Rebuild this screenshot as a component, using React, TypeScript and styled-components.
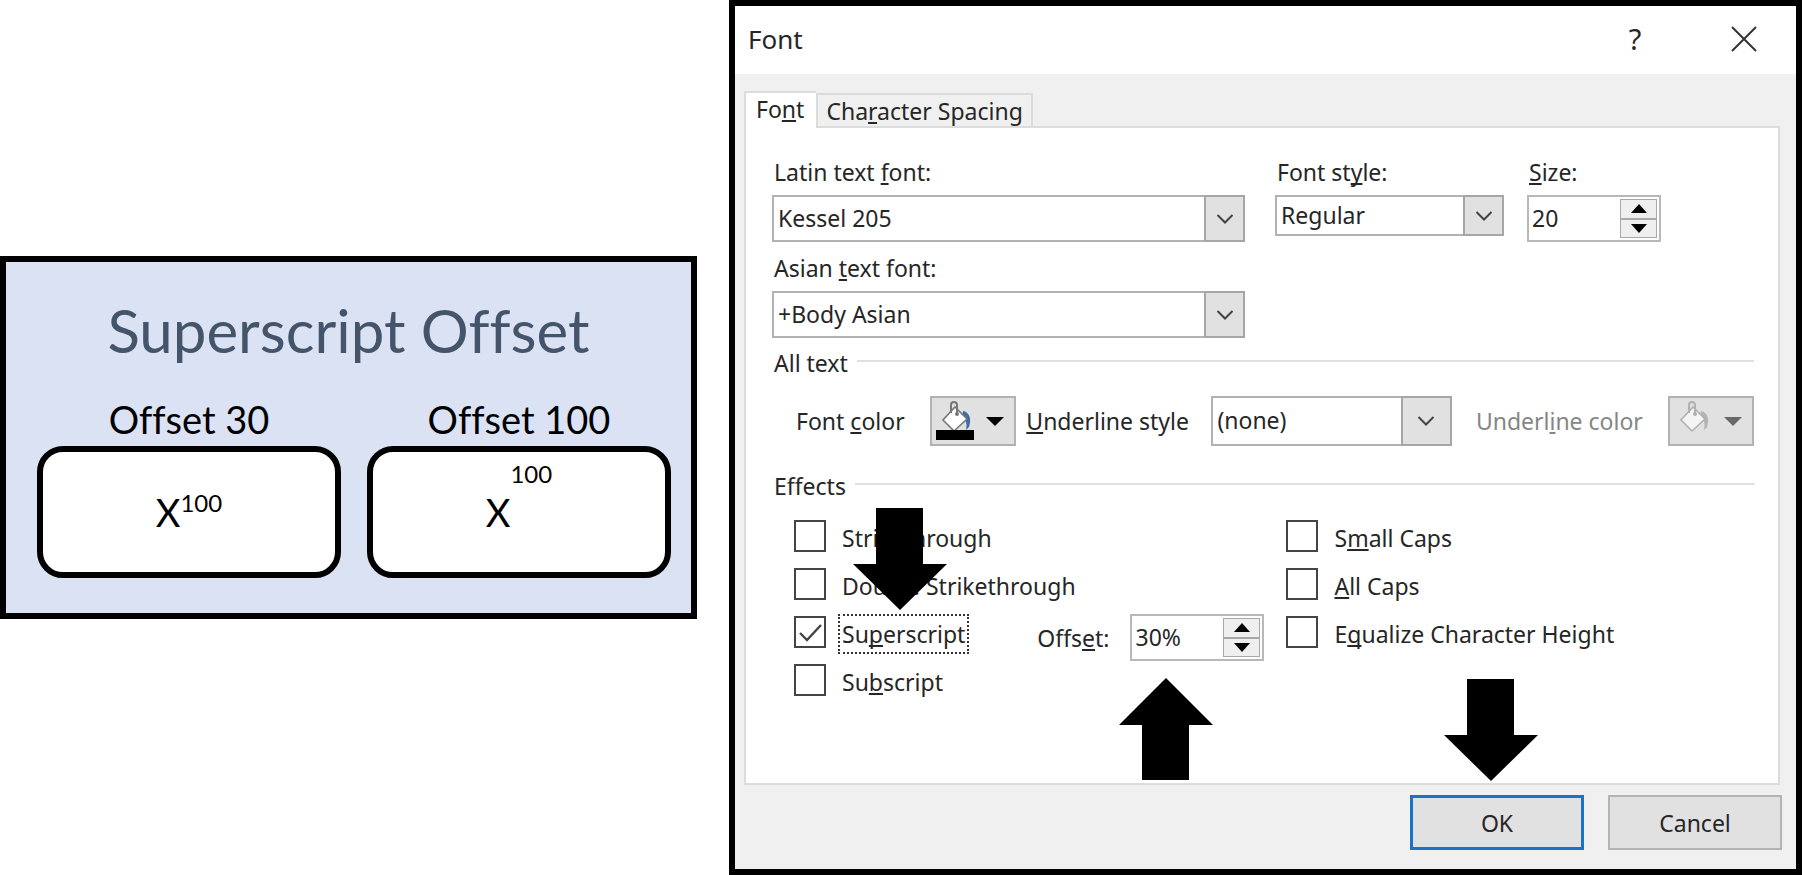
import React from "react";
import styled, { createGlobalStyle, css } from "styled-components";

const GlobalStyle = createGlobalStyle`
  *, *::before, *::after { box-sizing: border-box; }
  body { margin: 0; background: #fff; }
  button, input, select { font: inherit; color: inherit; margin: 0; }
`;

const Page = styled.main`
  display: grid;
  grid-template-columns: minmax(0, 697fr) minmax(0, 1073fr);
  gap: 32px;
  align-items: center;
  min-height: 100vh;
`;

/* ---------- Slide sample ---------- */

const Slide = styled.section`
  border: 6px solid #000;
  background: #dae2f3;
  padding: 24px 20px 35px 31px;
  font-family: Lato, "Liberation Sans", sans-serif;
  font-variant-ligatures: none;
  color: #000;
`;

const SlideTitle = styled.h1`
  margin: 0;
  padding-right: 11px;
  font-size: 60px;
  line-height: 88px;
  font-weight: 400;
  text-align: center;
  color: #44546a;
  white-space: nowrap;
`;

const Samples = styled.div`
  display: grid;
  grid-template-columns: 1fr 1fr;
  gap: 26px;
  margin-top: 24px;
`;

const Sample = styled.figure`
  margin: 0;
  text-align: center;
`;

const SampleLabel = styled.figcaption`
  padding-bottom: 6px;
  font-size: 38px;
  line-height: 42px;
  white-space: nowrap;
`;

const SampleBox = styled.div`
  display: flex;
  justify-content: center;
  align-items: center;
  height: 132px;
  border: 6px solid #000;
  border-radius: 26px;
  background: #fff;
  font-size: 38px;
  line-height: 48px;
`;

const Raised = styled.sup<{ $rise: number }>`
  align-self: flex-start;
  padding-top: ${(p) => p.$rise}px;
  font-size: 24px;
  line-height: 32px;
`;

/* ---------- Dialog frame ---------- */

const Dialog = styled.section`
  display: flex;
  flex-direction: column;
  min-height: 100vh;
  border: 6px solid #000;
  background: #f0f0f0;
  font-family: "Noto Sans", "Open Sans", sans-serif;
  font-size: 23px;
  line-height: 32px;
  color: #262626;
  white-space: nowrap;
`;

const TitleBar = styled.header`
  display: flex;
  align-items: center;
  gap: 61px;
  height: 68px;
  padding: 0 28px 2px 13px;
  background: #fff;
`;

const DialogTitle = styled.h2`
  flex: 1;
  margin: 0;
  font-size: 26px;
  font-weight: 400;
`;

const BarButton = styled.button`
  display: flex;
  align-items: center;
  justify-content: center;
  width: 48px;
  height: 48px;
  padding: 0;
  border: 0;
  background: none;
  font-size: 29px;
`;

const Tabs = styled.div`
  display: flex;
  align-items: flex-end;
  height: 53px;
  padding: 16px 9px 0;
`;

const Tab = styled.button<{ $active?: boolean }>`
  height: 34px;
  padding: 0 8px;
  border: 2px solid #dcdcdc;
  border-bottom: 0;
  background: #f0f0f0;
  line-height: 30px;
  ${(p) =>
    p.$active &&
    css`
      position: relative;
      height: 38px;
      padding: 0 12px 4px 10px;
      border-right: 0;
      margin-bottom: -2px;
      background: #fff;
    `}
`;

const Panel = styled.div`
  flex: 1;
  margin: -1px 16px 0 9px;
  padding: 28px 24px 24px 26px;
  border: 2px solid #dcdcdc;
  background: #fff;
`;

const Footer = styled.footer`
  display: flex;
  justify-content: flex-end;
  gap: 24px;
  padding: 10px 14px 19px;
`;

const ActionSlot = styled.div`
  position: relative;
`;

const ActionButton = styled.button<{ $primary?: boolean }>`
  width: 174px;
  height: 55px;
  padding: 0;
  border: ${(p) => (p.$primary ? "3px solid #1a74c6" : "2px solid #b4b4b4")};
  background: #e1e1e1;
`;

/* ---------- Fields ---------- */

const Key = styled.u`
  text-decoration-thickness: 2px;
  text-underline-offset: 2px;
  text-decoration-skip-ink: none;
`;

const TopFields = styled.div`
  display: grid;
  grid-template-columns: minmax(0, 503fr) minmax(0, 252fr) minmax(0, 227fr);
  row-gap: 10px;
`;

const Field = styled.div<{ $end: number }>`
  display: flex;
  flex-direction: column;
  gap: 7px;
  padding-right: ${(p) => p.$end}px;
`;

const FieldLabel = styled.label<{ $muted?: boolean }>`
  padding-left: 2px;
  color: ${(p) => (p.$muted ? "#868686" : "inherit")};
`;

const Combo = styled.div<{ $height: number; $arrow: number }>`
  display: grid;
  grid-template-columns: minmax(0, 1fr) ${(p) => p.$arrow}px;
  height: ${(p) => p.$height}px;
`;

const ComboSelect = styled.select`
  grid-area: 1 / 1 / 2 / 3;
  appearance: none;
  width: 100%;
  padding: 0 4px 2px;
  border: 2px solid #b2b2b2;
  border-radius: 0;
  background: #fff;
`;

const ComboArrow = styled.span`
  grid-area: 1 / 2 / 2 / 3;
  display: flex;
  align-items: center;
  justify-content: center;
  border: 2px solid #a6a6a6;
  background: #e1e1e1;
  pointer-events: none;
`;

const SpinBox = styled.div`
  display: flex;
  width: 134px;
  height: 47px;
  padding: 2px;
  border: 2px solid #b8b8b8;
  background: #fff;
`;

const SpinInput = styled.input`
  flex: 1;
  min-width: 0;
  padding: 0 1px 2px;
  border: 0;
  background: none;
`;

const SpinKeys = styled.div`
  display: grid;
  grid-template-rows: 1fr 1fr;
  width: 37px;
`;

const SpinKey = styled.button`
  display: flex;
  align-items: center;
  justify-content: center;
  padding: 0;
  border: 1px solid #a8a8a8;
  background: #efefef;
`;

const GroupTitle = styled.h3<{ $gap: number }>`
  display: flex;
  align-items: center;
  gap: 9px;
  margin: ${(p) => p.$gap}px 0 16px;
  padding-left: 2px;
  font-size: inherit;
  font-weight: 400;

  &::after {
    content: "";
    flex: 1;
    height: 2px;
    margin-bottom: 4px;
    background: #e0e0e0;
  }
`;

const ColorRow = styled.div`
  display: grid;
  grid-template-columns:
    minmax(0, 135fr) minmax(0, 94fr) minmax(0, 186fr)
    minmax(0, 261fr) minmax(0, 193fr) 86px;
  align-items: center;
  min-height: 52px;
  padding-left: 22px;
`;

const ColorButton = styled.button`
  display: flex;
  align-items: center;
  justify-content: space-between;
  width: 86px;
  height: 50px;
  padding: 0 10px 0 4px;
  border: 2px solid #b2b2b2;
  background: #e1e1e1;
`;

const ComboCell = styled.div`
  padding-right: 22px;
`;

const Effects = styled.div`
  display: grid;
  grid-template-columns: minmax(0, 493fr) minmax(0, 468fr);
  padding-left: 22px;
`;

const CheckList = styled.div`
  display: flex;
  flex-direction: column;
  gap: 8px;
`;

const CheckRow = styled.div`
  position: relative;
  display: flex;
  align-items: flex-start;
  height: 40px;
`;

const CheckBox = styled.input`
  appearance: none;
  flex: none;
  width: 32px;
  height: 32px;
  margin: 2px 12px 0 0;
  border: 2px solid #444;
  background: #fff;

  &:checked {
    background: url("data:image/svg+xml,%3Csvg xmlns='http://www.w3.org/2000/svg' viewBox='0 0 28 28'%3E%3Cpath d='M4 15l7 7L25 7' fill='none' stroke='%23444' stroke-width='2.4'/%3E%3C/svg%3E");
  }
`;

const CheckLabel = styled.label<{ $focused?: boolean }>`
  position: relative;
  padding: 2px;
  border: 2px dotted ${(p) => (p.$focused ? "#333" : "transparent")};
`;

const OffsetField = styled.div`
  display: flex;
  align-items: center;
  gap: 21px;
  height: 47px;
  margin-left: auto;
  margin-right: 22px;
`;

const PointerSlot = styled.div`
  position: relative;
`;

const Pointer = styled.svg<{ $place: "label" | "spin" | "ok" }>`
  position: absolute;
  z-index: 1;
  width: 94px;
  height: 102px;
  fill: #000;
  ${(p) => p.$place === "label" && "left: 13px; bottom: calc(100% + 6px);"}
  ${(p) => p.$place === "spin" && "left: -11px; top: calc(100% + 17px);"}
  ${(p) => p.$place === "ok" && "left: 34px; bottom: calc(100% + 14px);"}
`;

/* ---------- Drawings ---------- */

const BlockArrow = ({ place, up }: { place: "label" | "spin" | "ok"; up?: boolean }) => (
  <Pointer $place={place} viewBox="0 0 94 102" aria-hidden="true">
    <path
      d={
        up
          ? "M47 0L94 47H70V102H23V47H0z"
          : "M23 0H70V56H94L47 102L0 56H23z"
      }
    />
  </Pointer>
);

const Chevron = () => (
  <svg width="18" height="12" viewBox="0 0 18 12" aria-hidden="true">
    <path d="M1.500 2L9 9.500L16.500 2" fill="none" stroke="#444" strokeWidth="2" />
  </svg>
);

const Triangle = ({ up, width = 16, fill = "#000" }: { up?: boolean; width?: number; fill?: string }) => (
  <svg width={width} height="9" viewBox="0 0 16 9" preserveAspectRatio="none" aria-hidden="true">
    <path d={up ? "M8 0L16 9H0z" : "M0 0H16L8 9z"} fill={fill} />
  </svg>
);

const Bucket = ({ muted }: { muted?: boolean }) => (
  <svg width="38" height="40" viewBox="0 0 38 40" aria-hidden="true">
    <path
      d="M27 10C33 11 36 17 33 26L30 29C31 24 31 20 26 16z"
      fill={muted ? "#b5b5b5" : "#3c6ea8"}
    />
    <path
      d="M19 6L31 18L18 30L7 19z"
      fill={muted ? "#f4f4f4" : "#fff"}
      stroke={muted ? "#b0b0b0" : "#777"}
      strokeWidth="1.600"
    />
    <path
      d="M15 12V4Q15 1 18 1T21 4V13"
      fill="none"
      stroke={muted ? "#b0b0b0" : "#777"}
      strokeWidth="2"
    />
    <circle cx="21" cy="13" r="2" fill={muted ? "#b0b0b0" : "#777"} />
    {!muted && <path d="M0 29H38V39H0z" fill="#000" />}
  </svg>
);

/* ---------- Composite controls ---------- */

type ComboProps = { id: string; value: string; height: number; arrow?: number };

const ComboBox = ({ id, value, height, arrow = 41 }: ComboProps) => (
  <Combo $height={height} $arrow={arrow}>
    <ComboSelect id={id} defaultValue={value}>
      <option>{value}</option>
    </ComboSelect>
    <ComboArrow>
      <Chevron />
    </ComboArrow>
  </Combo>
);

const Spinner = ({ id, value }: { id: string; value: string }) => (
  <SpinBox>
    <SpinInput id={id} type="text" defaultValue={value} />
    <SpinKeys>
      <SpinKey type="button" aria-label="Increase">
        <Triangle up />
      </SpinKey>
      <SpinKey type="button" aria-label="Decrease">
        <Triangle />
      </SpinKey>
    </SpinKeys>
  </SpinBox>
);

type CheckProps = {
  id: string;
  checked?: boolean;
  focused?: boolean;
  pointer?: boolean;
  label: React.ReactNode;
  children?: React.ReactNode;
};

const Check = ({ id, checked, focused, pointer, label, children }: CheckProps) => (
  <CheckRow>
    <CheckBox type="checkbox" id={id} defaultChecked={checked} />
    <CheckLabel htmlFor={id} $focused={focused}>
      {label}
      {pointer && <BlockArrow place="label" />}
    </CheckLabel>
    {children}
  </CheckRow>
);

export default function App() {
  return (
    <>
      <GlobalStyle />
      <Page>
        <Slide>
          <SlideTitle>Superscript Offset</SlideTitle>
          <Samples>
            <Sample>
              <SampleLabel>Offset 30</SampleLabel>
              <SampleBox>
                X<Raised $rise={35}>100</Raised>
              </SampleBox>
            </Sample>
            <Sample>
              <SampleLabel>Offset 100</SampleLabel>
              <SampleBox>
                X<Raised $rise={6}>100</Raised>
              </SampleBox>
            </Sample>
          </Samples>
        </Slide>

        <Dialog role="dialog" aria-labelledby="dialog-title">
          <TitleBar>
            <DialogTitle id="dialog-title">Font</DialogTitle>
            <BarButton type="button">?</BarButton>
            <BarButton type="button" aria-label="Close">
              <svg width="26" height="26" viewBox="0 0 26 26" aria-hidden="true">
                <path d="M1 1L25 25M25 1L1 25" stroke="#333" strokeWidth="2" />
              </svg>
            </BarButton>
          </TitleBar>

          <Tabs role="tablist">
            <Tab type="button" role="tab" aria-selected="true" $active>
              Fo<Key>n</Key>t
            </Tab>
            <Tab type="button" role="tab" aria-selected="false">
              Cha<Key>r</Key>acter Spacing
            </Tab>
          </Tabs>

          <Panel role="tabpanel">
            <TopFields>
              <Field $end={30}>
                <FieldLabel htmlFor="latin">
                  Latin text <Key>f</Key>ont:
                </FieldLabel>
                <ComboBox id="latin" value="Kessel 205" height={47} />
              </Field>
              <Field $end={23}>
                <FieldLabel htmlFor="style">
                  Font st<Key>y</Key>le:
                </FieldLabel>
                <ComboBox id="style" value="Regular" height={41} />
              </Field>
              <Field $end={0}>
                <FieldLabel htmlFor="size">
                  <Key>S</Key>ize:
                </FieldLabel>
                <Spinner id="size" value="20" />
              </Field>
              <Field $end={30}>
                <FieldLabel htmlFor="asian">
                  Asian <Key>t</Key>ext font:
                </FieldLabel>
                <ComboBox id="asian" value="+Body Asian" height={47} />
              </Field>
            </TopFields>

            <GroupTitle $gap={9}>All text</GroupTitle>
            <ColorRow>
              <FieldLabel htmlFor="font-color">
                Font <Key>c</Key>olor
              </FieldLabel>
              <ColorButton type="button" id="font-color">
                <Bucket />
                <Triangle width={18} />
              </ColorButton>
              <FieldLabel htmlFor="underline">
                <Key>U</Key>nderline style
              </FieldLabel>
              <ComboCell>
                <ComboBox id="underline" value="(none)" height={50} arrow={51} />
              </ComboCell>
              <FieldLabel htmlFor="underline-color" $muted>
                Underl<Key>i</Key>ne color
              </FieldLabel>
              <ColorButton type="button" id="underline-color" disabled>
                <Bucket muted />
                <Triangle width={18} fill="#686868" />
              </ColorButton>
            </ColorRow>

            <GroupTitle $gap={23}>Effects</GroupTitle>
            <Effects>
              <CheckList>
                <Check id="strike" label="Strikethrough" />
                <Check id="double" label="Double Strikethrough" />
                <Check
                  id="super"
                  checked
                  focused
                  pointer
                  label={
                    <>
                      Su<Key>p</Key>erscript
                    </>
                  }
                >
                  <OffsetField>
                    <label htmlFor="offset">
                      Offs<Key>e</Key>t:
                    </label>
                    <PointerSlot>
                      <Spinner id="offset" value="30%" />
                      <BlockArrow place="spin" up />
                    </PointerSlot>
                  </OffsetField>
                </Check>
                <Check
                  id="sub"
                  label={
                    <>
                      Su<Key>b</Key>script
                    </>
                  }
                />
              </CheckList>
              <CheckList>
                <Check
                  id="small"
                  label={
                    <>
                      S<Key>m</Key>all Caps
                    </>
                  }
                />
                <Check
                  id="all"
                  label={
                    <>
                      <Key>A</Key>ll Caps
                    </>
                  }
                />
                <Check
                  id="equal"
                  label={
                    <>
                      E<Key>q</Key>ualize Character Height
                    </>
                  }
                />
              </CheckList>
            </Effects>
          </Panel>

          <Footer>
            <ActionSlot>
              <ActionButton type="button" $primary>
                OK
              </ActionButton>
              <BlockArrow place="ok" />
            </ActionSlot>
            <ActionButton type="button">Cancel</ActionButton>
          </Footer>
        </Dialog>
      </Page>
    </>
  );
}
